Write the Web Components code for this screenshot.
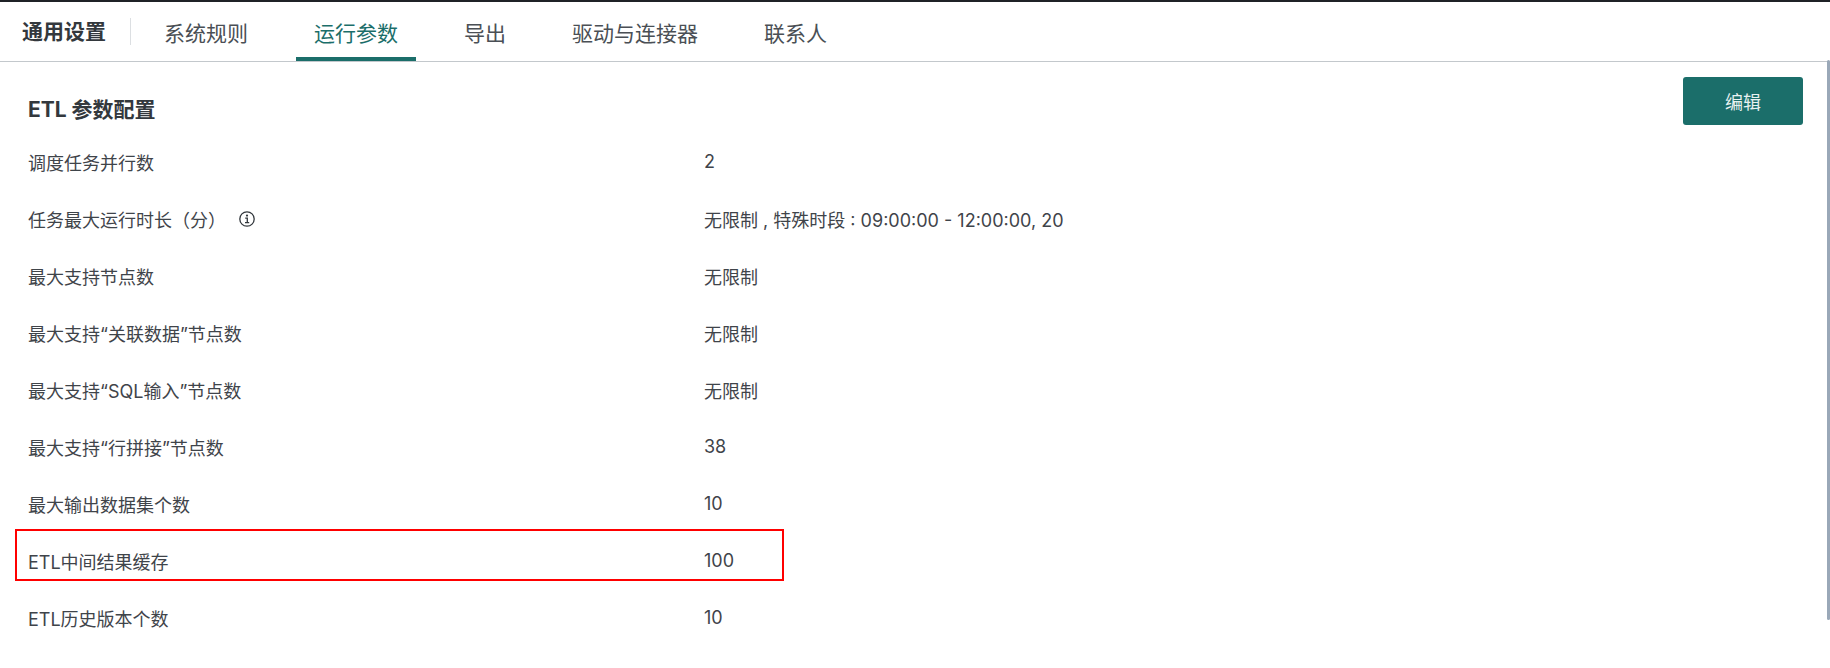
<!DOCTYPE html>
<html><head><meta charset="utf-8">
<style>
html,body{margin:0;padding:0;background:#fff;overflow:hidden}
body{font-family:Inter,"Noto Sans CJK SC",sans-serif;color:#33383d}
</style></head><body>
<settings-page>
<tab-bar slot="tabs">
  <span slot="lead">通用设置</span>
  <tab-item>系统规则</tab-item>
  <tab-item active>运行参数</tab-item>
  <tab-item>导出</tab-item>
  <tab-item>驱动与连接器</tab-item>
  <tab-item>联系人</tab-item>
</tab-bar>
<param-panel heading="ETL 参数配置" action="编辑">
  <param-row label="调度任务并行数">2</param-row>
  <param-row label="任务最大运行时长（分）" info>无限制 , 特殊时段 : 09:00:00 - 12:00:00, 20</param-row>
  <param-row label="最大支持节点数">无限制</param-row>
  <param-row label="最大支持“关联数据”节点数">无限制</param-row>
  <param-row label="最大支持“SQL输入”节点数">无限制</param-row>
  <param-row label="最大支持“行拼接”节点数">38</param-row>
  <param-row label="最大输出数据集个数">10</param-row>
  <param-row label="ETL中间结果缓存" marked>100</param-row>
  <param-row label="ETL历史版本个数">10</param-row>
</param-panel>
</settings-page>
<script>
function def(name, html){
  customElements.define(name, class extends HTMLElement{
    connectedCallback(){
      if(this.shadowRoot) return;
      const r=this.attachShadow({mode:'open'});
      r.innerHTML=typeof html==='function'?html(this):html;
    }
  });
}
def('settings-page',`<style>
:host{display:flex;flex-direction:column;height:668px;box-sizing:border-box;border-top:2px solid #1f2226;position:relative}
.bar{position:absolute;right:0;top:58px;width:3px;height:560px;background:#9aa8b8;border-radius:2px}
</style><slot name="tabs"></slot><slot></slot><div class="bar"></div>`);
def('tab-bar',`<style>
:host{display:flex;align-items:stretch;height:60px;box-sizing:border-box;border-bottom:1px solid #c3c8cc;padding-left:22px;flex:none}
::slotted([slot=lead]){align-self:center;font-size:21px;font-weight:700;line-height:27px;color:#33383d;padding-right:24px;border-right:1px solid #dcdfe2;margin-right:15px}
</style><slot name="lead"></slot><slot></slot>`);
def('tab-item',h=>`<style>
:host{display:flex;align-items:center;justify-content:center;box-sizing:border-box;padding:0 18px;margin-right:30px;font-size:21px;color:${h.hasAttribute('active')?'#1b6e6a':'#4a4f55'};${h.hasAttribute('active')?'box-shadow:inset 0 -4px 0 #1b6e6a;':''}height:59px}
</style><slot></slot>`);
def('param-panel',h=>`<style>
:host{display:block;padding:32px 28px 0;position:relative}
h2{margin:0 0 7px;font-size:21px;font-weight:700;line-height:32px;color:#33383d}
.a{position:absolute;right:27px;top:15px;width:120px;height:48px;border:0;border-radius:3px;background:#1b6e6a;color:#e8f1f0;font:18px Inter,"Noto Sans CJK SC",sans-serif;display:flex;align-items:center;justify-content:center}
.rows{display:flex;flex-direction:column}
</style><h2>${h.getAttribute('heading')}</h2><button class="a">${h.getAttribute('action')}</button><div class="rows"><slot></slot></div>`);
def('param-row',h=>`<style>
:host{display:grid;grid-template-columns:676px 1fr;align-items:center;height:57px;font-size:18px;color:#3f444a;position:relative}
.l{display:flex;align-items:center}
svg{margin-left:13px}
.box{position:absolute;left:-13px;top:-3px;width:769px;height:52px;box-sizing:border-box;border:2px solid #ff0000}
</style><div class="l">${h.getAttribute('label')}${h.hasAttribute('info')?'<svg width="16" height="16" viewBox="0 0 16 16" fill="none" stroke="#33383d"><circle cx="8" cy="8" r="7.2" stroke-width="1.3"/><circle cx="8" cy="4.6" r="1.1" fill="#33383d" stroke="none"/><path d="M6.2 7.1H8.3V11.6M6 11.7H10.2" stroke-width="1.3"/></svg>':''}</div><div><slot></slot></div>${h.hasAttribute('marked')?'<div class="box"></div>':''}`);
</script>
</body></html>
